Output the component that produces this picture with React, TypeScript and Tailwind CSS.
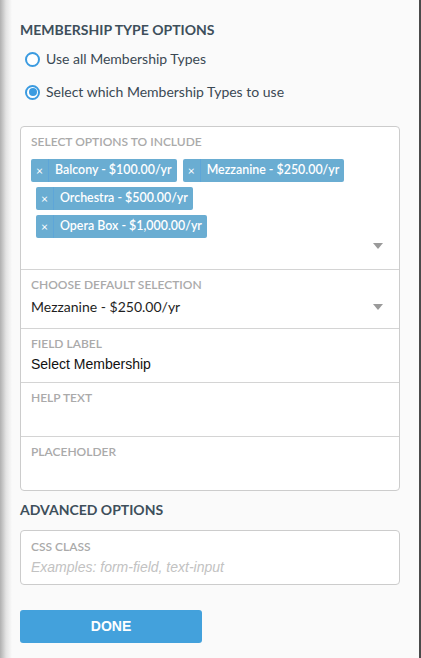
import React from "react";

const lato = { fontFamily: "Lato, 'Open Sans', sans-serif" };

function Tag({ label, className = "" }: { label: string; className?: string }) {
  return (
    <div className={`flex h-[23px] items-stretch rounded-[2px] bg-[#6aadd2] text-white ${className}`}>
      <div className="flex w-[18px] items-center justify-center border-r border-[#5ea6d8] text-[12px] leading-none">×</div>
      <div className="flex items-center pl-[6px] pr-[5px] text-[12.4px] font-semibold leading-none">{label}</div>
    </div>
  );
}

function Arrow() {
  return (
    <svg width="10" height="6" viewBox="0 0 10 6" className="shrink-0">
      <path d="M0 0 L10 0 L5 6 Z" fill="#9a9a9a" />
    </svg>
  );
}

function Label({ children }: { children: React.ReactNode }) {
  return <div className="text-[12px] font-semibold uppercase leading-[14px] text-[#aaaaaa]">{children}</div>;
}

export default function App() {
  return (
    <div className="relative h-[658px] w-[421px] overflow-hidden bg-[#fafafa]" style={lato}>
      <div className="pointer-events-none absolute left-0 top-0 h-full w-[12px] bg-gradient-to-r from-[#b0b0b0] via-[#e3e3e3] to-transparent" />
      <div className="pointer-events-none absolute right-0 top-0 h-full w-[2px] bg-[#4a4a4a]" />

      <div className="flex flex-col pl-[20px] pr-[21px] pt-[22px]">
        <div className="text-[14px] font-bold leading-[16px] text-[#3e4f5b]">MEMBERSHIP TYPE OPTIONS</div>

        <div className="mt-[13px] flex flex-col gap-[17px] pl-[5px]">
          <div className="flex items-center gap-[6px]">
            <div className="h-[15px] w-[15px] rounded-full border-2 border-[#3b9be0] bg-white" />
            <span className="text-[14px] leading-[16px] text-[#3a4954]">Use all Membership Types</span>
          </div>
          <div className="flex items-center gap-[6px]">
            <div className="flex h-[15px] w-[15px] items-center justify-center rounded-full border-2 border-[#3b9be0] bg-white">
              <div className="h-[8px] w-[8px] rounded-full bg-[#3b9be0]" />
            </div>
            <span className="text-[14px] leading-[16px] text-[#3a4954]">Select which Membership Types to use</span>
          </div>
        </div>

        <div className="mt-[26px] flex flex-col rounded-[4px] border border-[#cccccc] bg-white">
          <div className="flex h-[143px] flex-col border-b border-[#d4d4d4] pl-[10px] pr-[16px] pt-[8px]">
            <Label>SELECT OPTIONS TO INCLUDE</Label>
            <div className="mt-[10px] flex flex-wrap gap-x-[6px] gap-y-[5px]">
              <Tag label="Balcony - $100.00/yr" />
              <Tag label="Mezzanine - $250.00/yr" />
            </div>
            <div className="mt-[5px] flex flex-col items-start gap-[5px] pl-[5px]">
              <Tag label="Orchestra - $500.00/yr" />
              <Tag label="Opera Box - $1,000.00/yr" />
            </div>
            <div className="mt-[5px] flex justify-end">
              <Arrow />
            </div>
          </div>

          <div className="flex h-[59px] flex-col border-b border-[#d4d4d4] pl-[10px] pr-[16px] pt-[8px]">
            <Label>CHOOSE DEFAULT SELECTION</Label>
            <div className="mt-[7px] flex items-center justify-between">
              <span className="text-[14px] leading-[16px] text-[#1e1e1e]">Mezzanine - $250.00/yr</span>
              <Arrow />
            </div>
          </div>

          <div className="flex h-[54px] flex-col border-b border-[#d4d4d4] pl-[10px] pt-[8px]">
            <Label>FIELD LABEL</Label>
            <div className="mt-[5px] text-[14px] leading-[16px] text-[#111]" style={{ fontFamily: "'Liberation Sans', Arial, sans-serif" }}>
              Select Membership
            </div>
          </div>

          <div className="flex h-[54px] flex-col border-b border-[#d4d4d4] pl-[10px] pt-[8px]">
            <Label>HELP TEXT</Label>
          </div>

          <div className="flex h-[53px] flex-col pl-[10px] pt-[8px]">
            <Label>PLACEHOLDER</Label>
          </div>
        </div>

        <div className="mt-[11px] text-[14px] font-bold leading-[16px] text-[#3e4f5b]">ADVANCED OPTIONS</div>

        <div className="mt-[12px] flex h-[55px] flex-col rounded-[4px] border border-[#cccccc] bg-white pl-[10px] pt-[9px]">
          <Label>CSS CLASS</Label>
          <div className="mt-[5px] text-[14px] italic leading-[16px] text-[#c2c2c2]" style={{ fontFamily: "'Liberation Sans', Arial, sans-serif" }}>
            Examples: form-field, text-input
          </div>
        </div>

        <button
          className="mt-[25px] flex h-[33px] w-[182px] items-center justify-center rounded-[3px] bg-[#43a1dc] text-[14px] font-bold text-white"
          style={{ fontFamily: "'Liberation Sans', Arial, sans-serif" }}
        >
          DONE
        </button>
      </div>
    </div>
  );
}
